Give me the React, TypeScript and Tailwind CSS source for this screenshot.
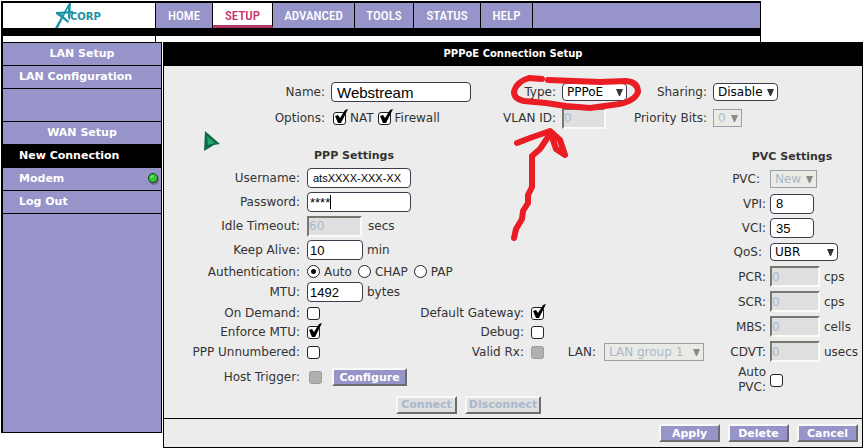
import { useState, type ReactNode } from "react";
import clsx from "clsx";

const tabs = [
  { name: "HOME", width: "w-[57px]" },
  { name: "SETUP", width: "w-[60px]" },
  { name: "ADVANCED", width: "w-[82px]" },
  { name: "TOOLS", width: "w-[59px]" },
  { name: "STATUS", width: "w-[67px]" },
  { name: "HELP", width: "w-[52px]" },
];

const roundField =
  "h-5 rounded border border-[#3c3c4c] bg-white px-[5px] font-['Liberation_Sans',sans-serif] text-black outline-none";
const sunkField =
  "h-[21px] border-2 border-t-[#77776f] border-l-[#77776f] border-r-[#fbfbf6] border-b-[#fbfbf6] bg-[#dfdfdf] text-xs text-[#a9b8cc]";

function Logo() {
  return (
    <svg width="52" height="25" viewBox="0 0 52 25" role="img" aria-label="Acorp">
      <g fill="#1b93a5">
        <path d="M16 0 L18 0 L17 17 L15 15 L15 5 L5 25 L2 25 Z" />
        <path d="M3 9 L20 8 L20 10 L8 11 L16 18 L15 20 L10 16 L3 11 Z" />
        <text x="17" y="17" fontFamily="DejaVu Sans, sans-serif" fontSize="10" fontWeight="bold">
          CORP
        </text>
      </g>
    </svg>
  );
}

function Check({ id, checked = false, disabled = false }: { id: string; checked?: boolean; disabled?: boolean }) {
  const [on, setOn] = useState(checked);
  return (
    <span className="relative block size-[13px] shrink-0">
      <input
        id={id}
        type="checkbox"
        checked={on}
        disabled={disabled}
        onChange={(e) => setOn(e.target.checked)}
        className="block size-[13px] appearance-none rounded-[3px] border border-[#222] bg-white disabled:border-dotted disabled:border-[#888] disabled:bg-[#b0b0b0]"
      />
      {on && (
        <svg className="pointer-events-none absolute -top-1 left-0" width="16" height="17" viewBox="0 0 16 17">
          <path d="M2 8 L5 7 L7 10 L12 2 L15 1 L8 15 L5 15 Z" fill="#000" />
        </svg>
      )}
    </span>
  );
}

function Select({ id, value, className, disabled = false }: { id: string; value: string; className: string; disabled?: boolean }) {
  return (
    <span className={clsx("relative block", className)}>
      <select
        id={id}
        disabled={disabled}
        className={clsx(
          "block h-[18px] w-full appearance-none border pl-1 text-xs leading-4 opacity-100",
          disabled
            ? "border-[#9aa0a8] bg-[#ebebe6] text-[#a9b8cc]"
            : "rounded border-[#3c3c4c] bg-white text-black",
        )}
      >
        <option>{value}</option>
      </select>
      <svg
        className={clsx("pointer-events-none absolute top-1.5 right-1", disabled ? "text-[#8a8a8a]" : "text-[#333]")}
        width="7"
        height="7"
        viewBox="0 0 7 7"
      >
        <path d="M0 0 H7 L4 7 H3 Z" fill="currentColor" />
      </svg>
    </span>
  );
}

function Button({ children, className, disabled = false }: { children: ReactNode; className: string; disabled?: boolean }) {
  return (
    <button
      type="button"
      disabled={disabled}
      className={clsx(
        "flex h-[18px] items-center justify-center border-2 border-t-[#f8f8f8] border-l-[#f8f8f8] border-r-[#6c6c6c] border-b-[#6c6c6c] text-[11px] leading-none font-bold whitespace-nowrap",
        disabled ? "bg-[#dfdfdf] text-[#a9b8cc]" : "bg-[#9694c8] text-white",
        className,
      )}
    >
      {children}
    </button>
  );
}

function Label({ id, children, className }: { id: string; children: ReactNode; className?: string }) {
  return (
    <label htmlFor={id} className={clsx("flex justify-end text-right whitespace-nowrap", className)}>
      {children}
    </label>
  );
}

function Row({ children, className }: { children: ReactNode; className: string }) {
  return (
    <div className={clsx("grid grid-cols-[136px_minmax(0,1fr)_109px_191px] items-center gap-x-[7px]", className)}>
      {children}
    </div>
  );
}

function PvcRow({ children, className }: { children: ReactNode; className: string }) {
  return <div className={clsx("grid grid-cols-[44px_minmax(0,1fr)] items-center gap-x-1", className)}>{children}</div>;
}

function Header() {
  return (
    <header className="ml-px w-[88%] border border-t-2 border-b-0 border-l-2 border-black">
      <div className="flex h-[25px]">
        <div className="flex w-[152px] items-start justify-center">
          <Logo />
        </div>
        <nav className="flex flex-1 border-l border-black bg-[#9694c8]">
          {tabs.map((tab) => (
            <a
              key={tab.name}
              href="#"
              className={clsx(
                "flex items-center justify-center border-r border-black font-['Roboto_Condensed','Liberation_Sans_Narrow','Liberation_Sans',sans-serif] text-[13px] font-medium",
                tab.name === "SETUP" ? "border-b-[3px] border-b-[#b03a68] bg-white pt-[3px] text-[#c8306c]" : "text-white",
                tab.width,
              )}
            >
              {tab.name}
            </a>
          ))}
        </nav>
      </div>
      <div className="h-2 bg-black" />
      <div className="flex h-1.5">
        <div className="w-[152px]" />
        <div className="flex-1 border-l border-black" />
      </div>
    </header>
  );
}

function Sidebar() {
  return (
    <aside className="mb-[15px] ml-px flex w-[161px] shrink-0 flex-col border border-l-2 border-black bg-[#9694c8] text-[11px] font-bold text-white">
      <div className="flex h-[23px] items-center justify-center border-b border-black">LAN Setup</div>
      <a href="#" className="flex h-[23px] items-center border-b border-black pl-4">LAN Configuration</a>
      <div className="h-[33px] border-b border-black" />
      <div className="flex h-[22px] items-center justify-center">WAN Setup</div>
      <a href="#" className="flex h-6 items-center bg-black pl-4">New Connection</a>
      <a href="#" className="flex h-[23px] items-center justify-between border-b border-black pr-0.5 pl-4">
        Modem
        <svg width="11" height="12" viewBox="0 0 11 12">
          <circle cx="6" cy="7" r="5" fill="#6c6a90" />
          <circle cx="5" cy="5" r="4.5" fill="#35c935" stroke="#143c14" />
          <path d="M3 5 Q3 3 5 3" fill="none" stroke="#b4f5b4" />
        </svg>
      </a>
      <a href="#" className="flex h-[23px] items-center border-b border-black pl-4">Log Out</a>
    </aside>
  );
}

function General() {
  return (
    <div className="grid grid-cols-[161px_minmax(0,1fr)_55px_64px_75px_149px] grid-rows-[30px_22px] items-center gap-x-1.5">
      <Label id="name">Name:</Label>
      <input id="name" defaultValue="Webstream" className={clsx(roundField, "w-[140px] text-[15px]")} />
      <Label id="type">Type:</Label>
      <Select id="type" value="PPPoE" className="w-[65px]" />
      <Label id="sharing">Sharing:</Label>
      <Select id="sharing" value="Disable" className="w-[65px]" />

      <span className="text-right">Options:</span>
      <div className="flex items-center gap-1 pl-0.5">
        <Check id="nat" checked />
        <label htmlFor="nat">NAT</label>
        <Check id="firewall" checked />
        <label htmlFor="firewall">Firewall</label>
      </div>
      <Label id="vlan">VLAN ID:</Label>
      <input id="vlan" disabled defaultValue="0" className={clsx(sunkField, "w-[44px]")} />
      <Label id="priority">Priority Bits:</Label>
      <Select id="priority" value="0" disabled className="w-[29px]" />
    </div>
  );
}

function PppSettings() {
  return (
    <section className="min-w-0 flex-1">
      <h2 className="flex h-5 w-[380px] items-center justify-center text-[11px] font-bold">PPP Settings</h2>
      <Row className="h-6">
        <Label id="user">Username:</Label>
        <input id="user" defaultValue="atsXXXX-XXX-XX" className={clsx(roundField, "w-[104px] text-[11px]")} />
      </Row>
      <Row className="h-6">
        <Label id="pass">Password:</Label>
        <div className="relative w-[104px]">
          <input id="pass" defaultValue="****" className={clsx(roundField, "block w-full pl-0.5 text-[13px]")} />
          <span className="absolute top-[3px] left-[23px] h-3.5 w-px bg-black" />
        </div>
      </Row>
      <Row className="h-6">
        <Label id="idle">Idle Timeout:</Label>
        <div className="flex items-center gap-1.5">
          <input id="idle" disabled defaultValue="60" className={clsx(sunkField, "w-[55px]")} />
          secs
        </div>
      </Row>
      <Row className="h-6">
        <Label id="keep">Keep Alive:</Label>
        <div className="flex items-center gap-1">
          <input id="keep" defaultValue="10" className={clsx(roundField, "w-14 pl-0.5 text-[13px]")} />
          min
        </div>
      </Row>
      <Row className="h-[19px]">
        <span className="text-right">Authentication:</span>
        <div className="col-span-3 flex items-center gap-1">
          {["Auto", "CHAP", "PAP"].map((name) => (
            <label key={name} className="mr-0.5 flex items-center gap-1">
              <input
                type="radio"
                name="auth"
                defaultChecked={name === "Auto"}
                className="size-[13px] appearance-none rounded-full border border-[#222] bg-white checked:bg-[radial-gradient(circle,#000_0_2px,#fff_3px)]"
              />
              {name}
            </label>
          ))}
        </div>
      </Row>
      <Row className="h-[22px]">
        <Label id="mtu">MTU:</Label>
        <div className="flex items-center gap-1">
          <input id="mtu" defaultValue="1492" className={clsx(roundField, "w-14 pl-0.5 text-[13px]")} />
          bytes
        </div>
      </Row>
      <Row className="h-5">
        <Label id="demand">On Demand:</Label>
        <Check id="demand" />
        <Label id="gateway">Default Gateway:</Label>
        <Check id="gateway" checked />
      </Row>
      <Row className="h-[18px]">
        <Label id="enforce">Enforce MTU:</Label>
        <Check id="enforce" checked />
        <Label id="debug">Debug:</Label>
        <Check id="debug" />
      </Row>
      <Row className="h-[22px]">
        <Label id="unnumbered">PPP Unnumbered:</Label>
        <Check id="unnumbered" />
        <Label id="rx">Valid Rx:</Label>
        <div className="flex items-center">
          <Check id="rx" disabled />
          <Label id="lan" className="mr-2 w-[52px]">LAN:</Label>
          <Select id="lan" value="LAN group 1" disabled className="w-[100px]" />
        </div>
      </Row>
      <Row className="h-7">
        <Label id="host">Host Trigger:</Label>
        <div className="flex items-center gap-2.5 pl-0.5">
          <Check id="host" disabled />
          <Button className="w-[75px]">Configure</Button>
        </div>
      </Row>
      <div className="flex h-[27px] items-center justify-end gap-2 pr-[181px]">
        <Button disabled className="w-[61px]">Connect</Button>
        <Button disabled className="w-[76px]">Disconnect</Button>
      </div>
    </section>
  );
}

function PvcSettings() {
  const rates = [
    { name: "PCR", unit: "cps" },
    { name: "SCR", unit: "cps" },
    { name: "MBS", unit: "cells" },
    { name: "CDVT", unit: "usecs" },
  ];
  return (
    <section className="w-[140px] shrink-0">
      <h2 className="flex h-[21px] items-center justify-center text-[11px] font-bold">PVC Settings</h2>
      <PvcRow className="h-6">
        <Label id="pvc" className="pr-1.5">PVC:</Label>
        <Select id="pvc" value="New" disabled className="w-[47px]" />
      </PvcRow>
      <PvcRow className="h-[25px]">
        <Label id="vpi">VPI:</Label>
        <input id="vpi" defaultValue="8" className={clsx(roundField, "w-11 text-[13px]")} />
      </PvcRow>
      <PvcRow className="h-6">
        <Label id="vci">VCI:</Label>
        <input id="vci" defaultValue="35" className={clsx(roundField, "w-11 text-[13px]")} />
      </PvcRow>
      <PvcRow className="h-6">
        <Label id="qos" className="pr-1">QoS:</Label>
        <Select id="qos" value="UBR" className="w-[68px]" />
      </PvcRow>
      {rates.map((rate) => (
        <PvcRow key={rate.name} className="h-[25px]">
          <Label id={rate.name}>{rate.name}:</Label>
          <div className="flex items-center gap-1">
            <input id={rate.name} disabled defaultValue="0" className={clsx(sunkField, "w-[50px]")} />
            {rate.unit}
          </div>
        </PvcRow>
      ))}
      <PvcRow className="h-8">
        <Label id="autopvc" className="leading-[15px]">
          Auto
          <br />
          PVC:
        </Label>
        <Check id="autopvc" />
      </PvcRow>
    </section>
  );
}

// hand drawn ring around the type field with an arrow pointing at it
function Marker() {
  return (
    <svg className="pointer-events-none absolute top-0 left-[340px]" width="150" height="180" viewBox="504 66 150 180">
      <g fill="none" stroke="#ea1c24" strokeWidth="6" strokeLinecap="round" strokeLinejoin="round">
        <path d="M542 79 L529 78 Q516 82 514 92 Q514 99 524 101 L546 103 L566 106 L590 108 L612 105 Q634 103 638 92 Q638 82 626 81 L600 82 L548 80" />
        <path d="M514 238 L516 229 L522 219 L523 211 L528 203 L528 195 L532 187 L532 156 L540 149 L550 134" />
        <path d="M517 143 L530 138 L550 131 L560 140 L565 155 L556 149 L551 134" />
      </g>
    </svg>
  );
}

function Pointer() {
  return (
    <svg className="pointer-events-none absolute top-[65px] left-10" width="17" height="20" viewBox="0 0 17 20">
      <path d="M1 0 L16 13 L10 14 L0 20 Z" fill="#0b6b45" />
      <path d="M3 5 L11 12 L4 14 Z" fill="#25a56c" />
    </svg>
  );
}

export default function App() {
  return (
    <div className="bg-white pt-px font-['DejaVu_Sans',Verdana,sans-serif] text-xs leading-4 text-[#333]">
      <Header />
      <div className="flex">
        <Sidebar />
        <main className="mx-px min-w-0 flex-1 border border-t-0 border-black bg-[#ececec]">
          <h1 className="flex h-6 items-center justify-center bg-black text-[10px] font-bold text-white">
            PPPoE Connection Setup
          </h1>
          <form className="relative pt-[11px]">
            <General />
            <div className="flex pt-[17px]">
              <PppSettings />
              <PvcSettings />
            </div>
            <Pointer />
            <Marker />
          </form>
          <footer className="flex h-[29px] items-center justify-end gap-2 border-t border-black pr-1">
            <Button className="w-[61px]">Apply</Button>
            <Button className="w-[61px]">Delete</Button>
            <Button className="w-[61px]">Cancel</Button>
          </footer>
        </main>
      </div>
    </div>
  );
}
